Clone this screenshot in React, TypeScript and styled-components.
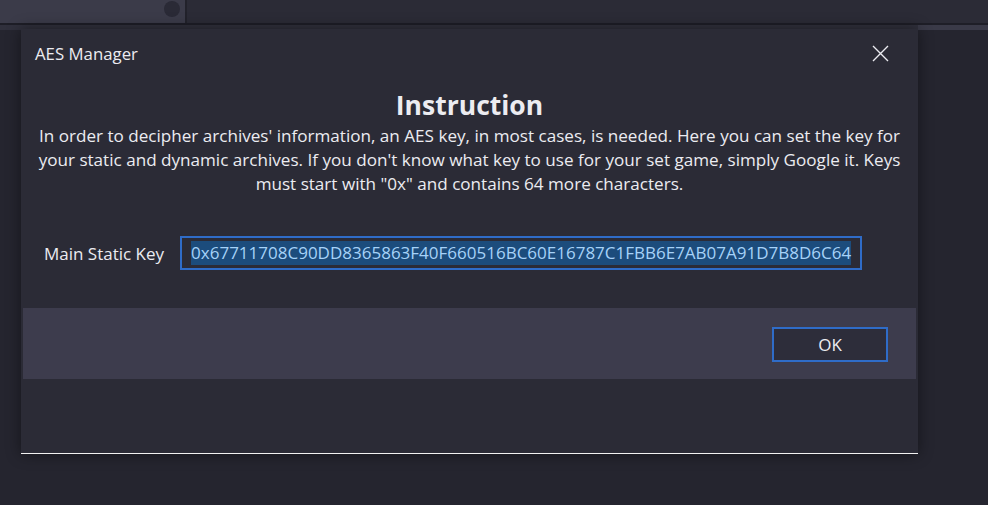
import React from "react";
import styled, { createGlobalStyle } from "styled-components";

const Global = createGlobalStyle`
  html, body { margin: 0; padding: 0; background: #25252f; }
  body { width: 988px; height: 505px; overflow: hidden; font-family: "Open Sans", "Noto Sans", sans-serif; }
  #root { width: 988px; height: 505px; }
`;

const Page = styled.div`
  position: relative;
  width: 988px;
  height: 505px;
  display: flex;
  flex-direction: column;
  background: #25252f;
`;

const TopBar = styled.div`
  height: 23px;
  display: flex;
  background: #2b2b36;
  border-bottom: 2px solid #1e1e27;
`;

const Tab = styled.div`
  width: 187px;
  background: #3b3b49;
  border-right: 2px solid #22222b;
  display: flex;
  align-items: center;
  justify-content: flex-end;
  padding-right: 5px;
  box-sizing: border-box;
`;

const TabDot = styled.div`
  width: 16px;
  height: 16px;
  border-radius: 50%;
  background: #2a2a36;
  margin-top: -6px;
`;

const Strip = styled.div`
  height: 5px;
  background: #30303c;
  display: flex;
  justify-content: flex-end;
`;

const StripLight = styled.div`
  width: 70px;
  background: #3a3a48;
`;

const Dialog = styled.div`
  position: absolute;
  left: 21px;
  top: 29px;
  width: 897px;
  height: 425px;
  box-sizing: border-box;
  background: #2b2b36;
  border-bottom: 1px solid #f2f2f2;
  box-shadow: 0 0 14px rgba(0, 0, 0, 0.45);
  display: flex;
  flex-direction: column;
  color: #ececf1;
  padding: 0 2px;
`;

const Header = styled.div`
  height: 48px;
  display: flex;
  align-items: center;
  justify-content: space-between;
  padding: 0 27px 0 12px;
`;

const Title = styled.div`
  font-size: 16.8px;
  color: #ececf1;
`;

const CloseButton = styled.div`
  width: 18px;
  height: 18px;
  display: flex;
  align-items: center;
  justify-content: center;
`;

const Heading = styled.div`
  margin-top: 11px;
  text-align: center;
  font-size: 26.5px;
  line-height: 34px;
  font-weight: 700;
  color: #ececf1;
`;

const Paragraph = styled.div`
  margin-top: 2px;
  text-align: center;
  font-size: 17.1px;
  line-height: 24px;
  white-space: nowrap;
  color: #ececf1;
`;

const Row = styled.div`
  margin-top: 40px;
  display: flex;
  align-items: center;
  padding-left: 21px;
  gap: 16px;
`;

const Label = styled.div`
  font-size: 17px;
  color: #ececf1;
`;

const KeyBox = styled.div`
  width: 682px;
  height: 34px;
  box-sizing: border-box;
  border: 2px solid #2f6cc8;
  background: #2b2b36;
  display: flex;
  align-items: center;
  padding-left: 9px;
`;

const Selected = styled.span`
  background: #1c4c7c;
  color: #a6d2f8;
  font-size: 17px;
  line-height: 24px;
  white-space: nowrap;
`;

const Footer = styled.div`
  margin-top: 38px;
  height: 71px;
  background: #3d3c4d;
  display: flex;
  align-items: center;
  justify-content: flex-end;
  padding-right: 28px;
`;

const OkButton = styled.div`
  width: 116px;
  height: 35px;
  box-sizing: border-box;
  border: 2px solid #2f6cc8;
  background: #2d2d3a;
  display: flex;
  align-items: center;
  justify-content: center;
  font-size: 17px;
  color: #ececf1;
  margin-top: 1px;
`;

export default function App() {
  return (
    <>
      <Global />
      <Page>
        <TopBar>
          <Tab>
            <TabDot />
          </Tab>
        </TopBar>
        <Strip>
          <StripLight />
        </Strip>
        <Dialog>
          <Header>
            <Title>AES Manager</Title>
            <CloseButton>
              <svg width="17" height="17" viewBox="0 0 17 17">
                <path d="M1 1 L16 16 M16 1 L1 16" stroke="#ececf1" strokeWidth="1.4" fill="none" />
              </svg>
            </CloseButton>
          </Header>
          <Heading>Instruction</Heading>
          <Paragraph>
            In order to decipher archives' information, an AES key, in most cases, is needed. Here you can set the key for
            <br />
            your static and dynamic archives. If you don't know what key to use for your set game, simply Google it. Keys
            <br />
            must start with "0x" and contains 64 more characters.
          </Paragraph>
          <Row>
            <Label>Main Static Key</Label>
            <KeyBox>
              <Selected>0x67711708C90DD8365863F40F660516BC60E16787C1FBB6E7AB07A91D7B8D6C64</Selected>
            </KeyBox>
          </Row>
          <Footer>
            <OkButton>OK</OkButton>
          </Footer>
        </Dialog>
      </Page>
    </>
  );
}
